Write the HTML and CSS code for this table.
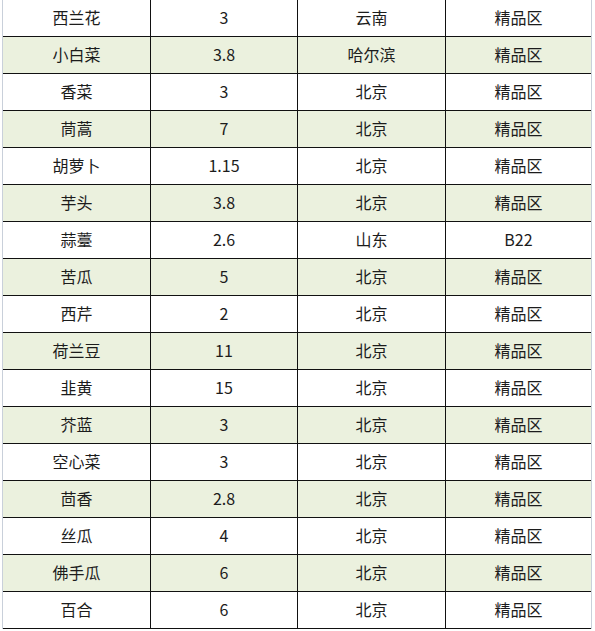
FILE: index.html
```html
<!DOCTYPE html>
<html lang="zh">
<head>
<meta charset="utf-8">
<title>蔬菜价格表</title>
<link rel="stylesheet" href="styles.css">
</head>
<body>
<div class="sheet">
  <div class="row"><div class="cell">西兰花</div><div class="cell">3</div><div class="cell">云南</div><div class="cell">精品区</div></div>
  <div class="row alt"><div class="cell">小白菜</div><div class="cell">3.8</div><div class="cell">哈尔滨</div><div class="cell">精品区</div></div>
  <div class="row"><div class="cell">香菜</div><div class="cell">3</div><div class="cell">北京</div><div class="cell">精品区</div></div>
  <div class="row alt"><div class="cell">茼蒿</div><div class="cell">7</div><div class="cell">北京</div><div class="cell">精品区</div></div>
  <div class="row"><div class="cell">胡萝卜</div><div class="cell">1.15</div><div class="cell">北京</div><div class="cell">精品区</div></div>
  <div class="row alt"><div class="cell">芋头</div><div class="cell">3.8</div><div class="cell">北京</div><div class="cell">精品区</div></div>
  <div class="row"><div class="cell">蒜薹</div><div class="cell">2.6</div><div class="cell">山东</div><div class="cell">B22</div></div>
  <div class="row alt"><div class="cell">苦瓜</div><div class="cell">5</div><div class="cell">北京</div><div class="cell">精品区</div></div>
  <div class="row"><div class="cell">西芹</div><div class="cell">2</div><div class="cell">北京</div><div class="cell">精品区</div></div>
  <div class="row alt"><div class="cell">荷兰豆</div><div class="cell">11</div><div class="cell">北京</div><div class="cell">精品区</div></div>
  <div class="row"><div class="cell">韭黄</div><div class="cell">15</div><div class="cell">北京</div><div class="cell">精品区</div></div>
  <div class="row alt"><div class="cell">芥蓝</div><div class="cell">3</div><div class="cell">北京</div><div class="cell">精品区</div></div>
  <div class="row"><div class="cell">空心菜</div><div class="cell">3</div><div class="cell">北京</div><div class="cell">精品区</div></div>
  <div class="row alt"><div class="cell">茴香</div><div class="cell">2.8</div><div class="cell">北京</div><div class="cell">精品区</div></div>
  <div class="row"><div class="cell">丝瓜</div><div class="cell">4</div><div class="cell">北京</div><div class="cell">精品区</div></div>
  <div class="row alt"><div class="cell">佛手瓜</div><div class="cell">6</div><div class="cell">北京</div><div class="cell">精品区</div></div>
  <div class="row"><div class="cell">百合</div><div class="cell">6</div><div class="cell">北京</div><div class="cell">精品区</div></div>
</div>
</body>
</html>
```
FILE: styles.css
```css
* { box-sizing: border-box; }
html, body {
  margin: 0;
  padding: 0;
  background: #ffffff;
}
body {
  font-family: "Noto Sans CJK SC", "Noto Sans", sans-serif;
  font-size: 16px;
  color: #1c1c1c;
  overflow: hidden;
}
.sheet {
  margin-left: 2px;
  width: 590px;
  border-left: 1px solid #c9d0da;
  border-right: 1px solid #c9d0da;
}
.row {
  display: grid;
  grid-template-columns: 148px 147px 148px 145px;
  height: 37px;
  border-bottom: 1px solid #111;
}
.row.alt {
  background: #ebf1de;
}
.cell {
  text-align: center;
  line-height: 34px;
  border-right: 1.5px solid #111;
  white-space: nowrap;
}
.cell:last-child {
  border-right: none;
}
```
